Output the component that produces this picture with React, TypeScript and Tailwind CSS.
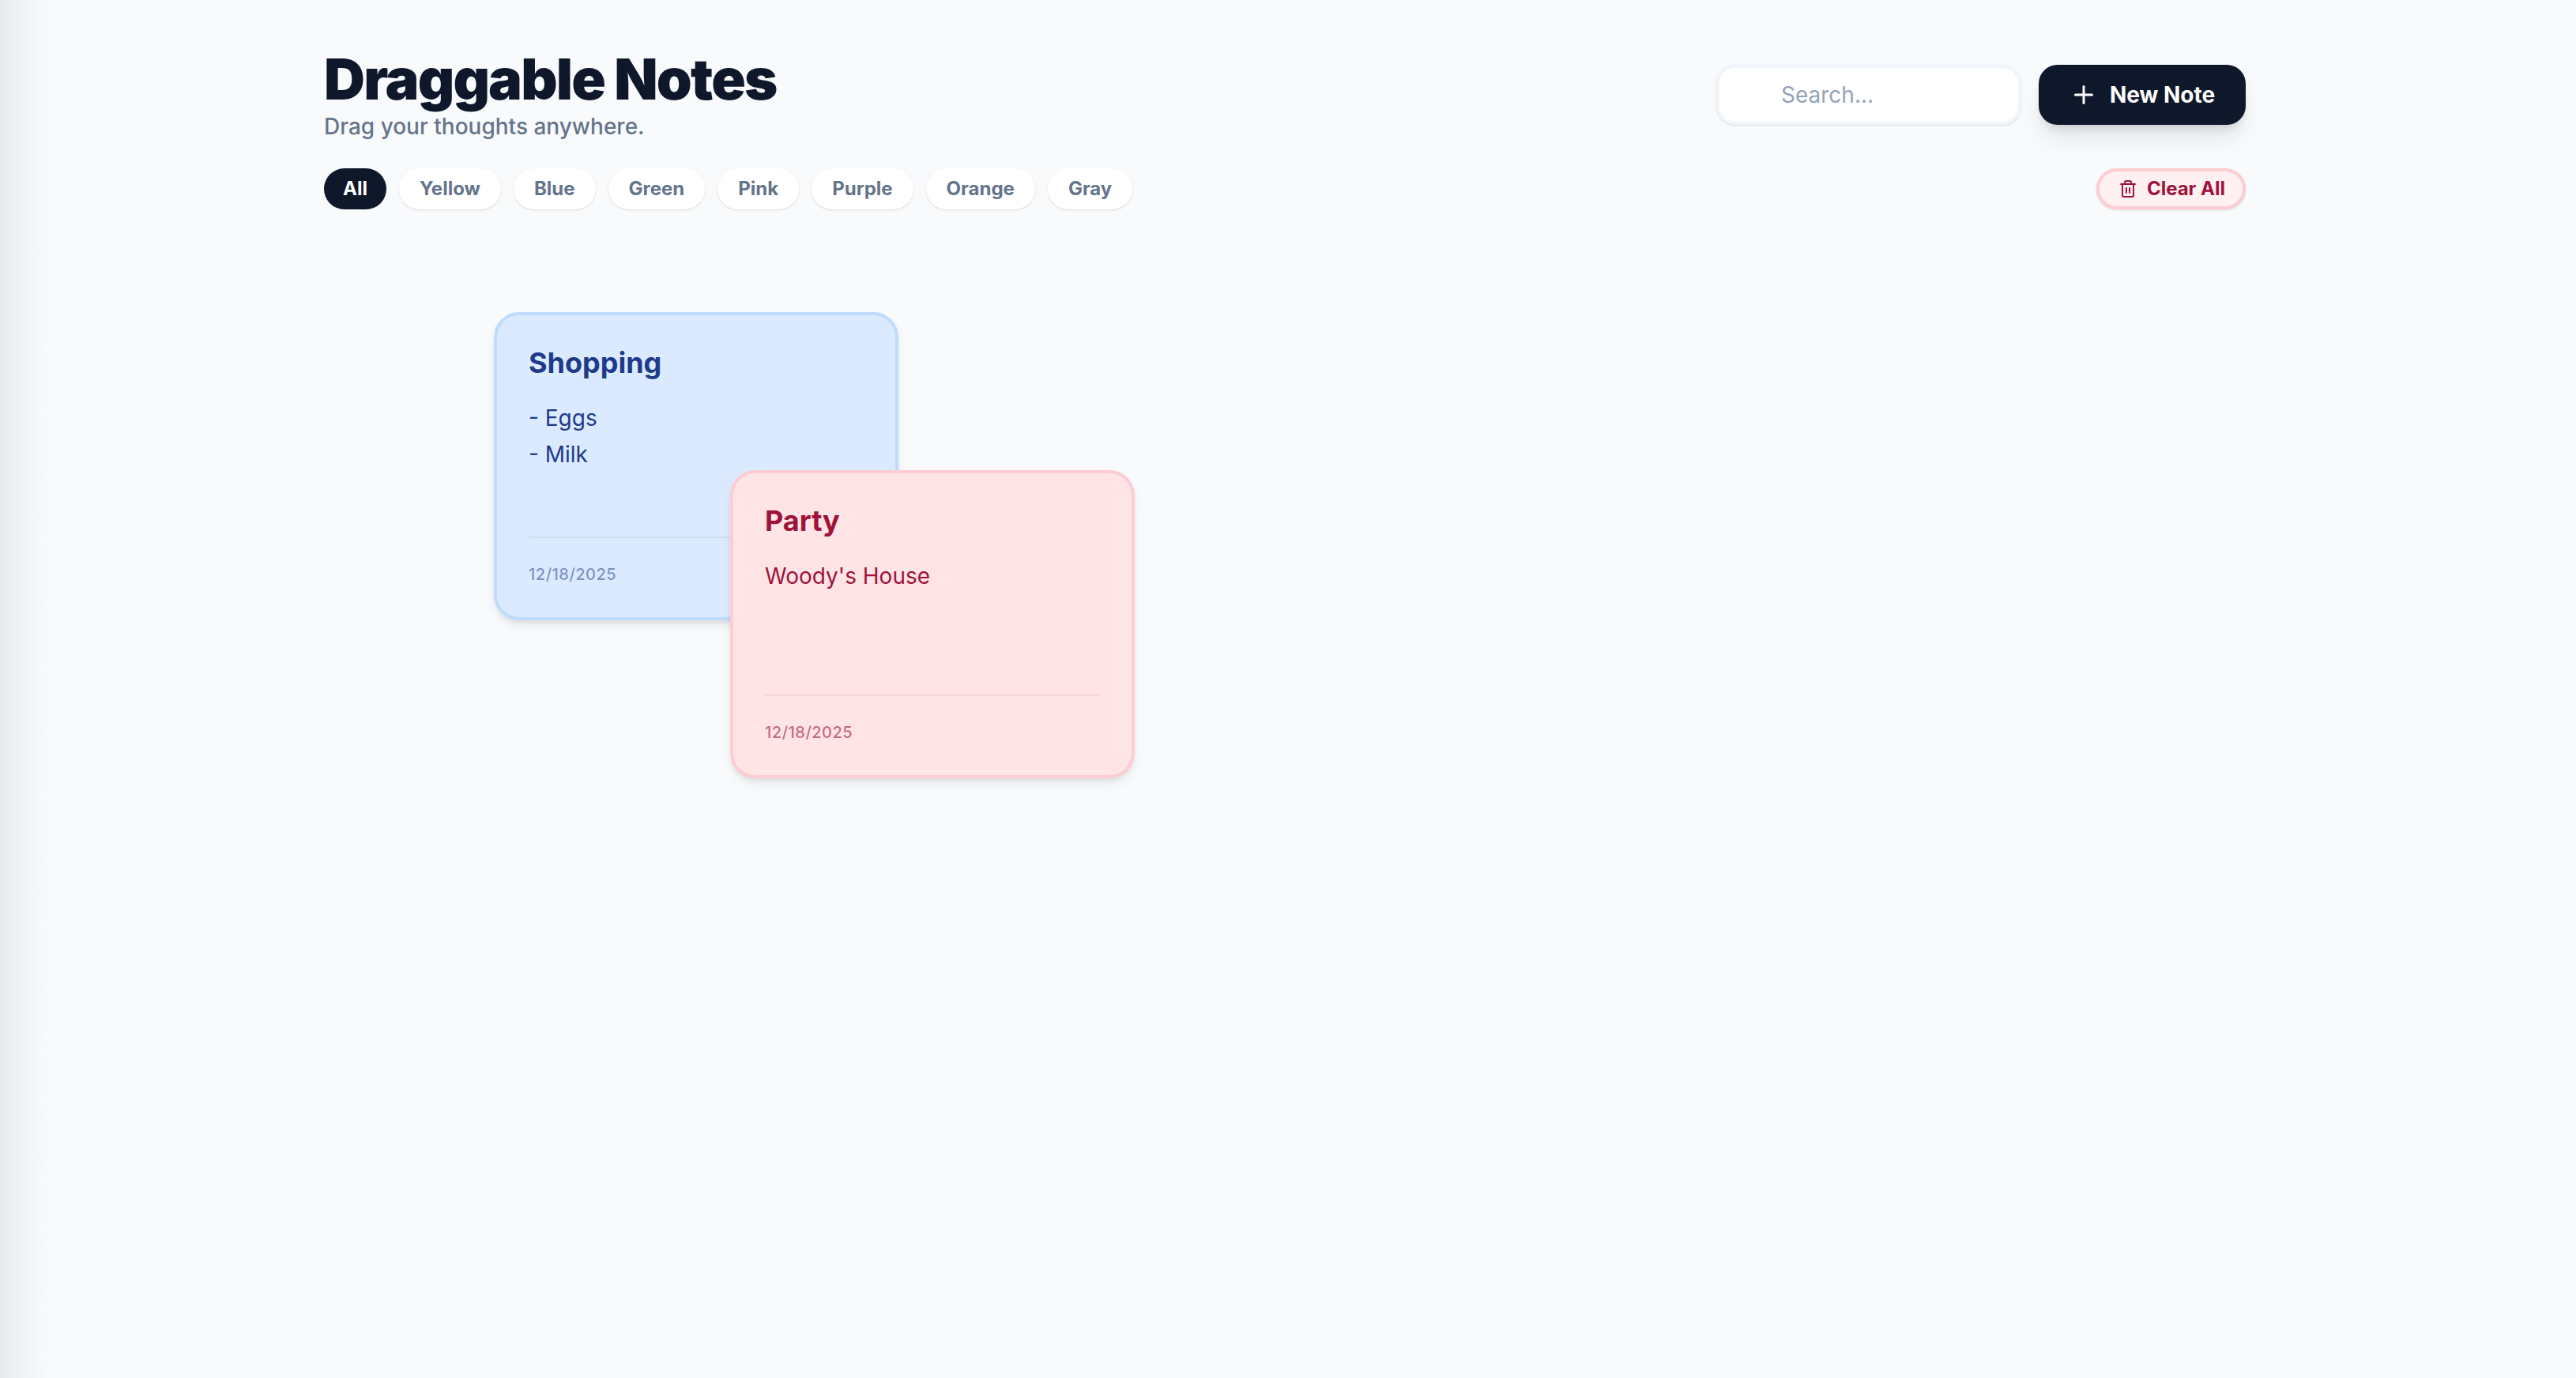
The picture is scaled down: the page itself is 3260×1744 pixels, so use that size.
import React from 'react';
import { Plus, Trash2 } from 'lucide-react';

const filters = ['All', 'Yellow', 'Blue', 'Green', 'Pink', 'Purple', 'Orange', 'Gray'];

function NoteCard({ title, lines, className, dateClass, style }: {
  title: string;
  lines: string[];
  className: string;
  dateClass: string;
  style: React.CSSProperties;
}) {
  return (
    <div
      style={style}
      className={`absolute flex h-[390px] w-[512px] flex-col rounded-[32px] border-4 px-10 pt-[32px] pb-[36px] shadow-[0_8px_16px_-4px_rgba(0,0,0,0.1),0_4px_8px_-4px_rgba(0,0,0,0.1)] ${className}`}
    >
      <h3 className="text-[36px] leading-[56px] font-bold">{title}</h3>
      <div className="mt-[20px] flex-1 text-[28px] leading-[45.5px]">
        {lines.map(line => <p key={line}>{line}</p>)}
      </div>
      <div className={`mb-[2px] border-t-2 pt-[30px] text-[20px] leading-[32px] font-medium tracking-[0.5px] ${dateClass}`}>
        12/18/2025
      </div>
    </div>
  );
}

export default function App() {
  return (
    <div className="relative min-h-[1744px] bg-[#f8fafc] pt-[64px] pr-[418px] pl-[410px] font-['Inter',sans-serif]">
      <div className="absolute inset-y-0 left-0 w-[60px] bg-gradient-to-r from-[#e9eaeb] to-transparent"></div>

      <div className="relative flex items-start justify-between">
        <div>
          <h1 className="text-[72px] leading-[72px] font-black tracking-[-1.9px] text-[#0f172a]">Draggable Notes</h1>
          <p className="mt-[8px] text-[28px] leading-[32px] font-medium text-[#64748b]">Drag your thoughts anywhere.</p>
        </div>
        <div className="mt-[18px] flex gap-[22px]">
          <input
            readOnly
            placeholder="Search..."
            className="h-[76px] w-[386px] rounded-3xl border-4 border-[#f1f5f9] bg-white pl-[78px] text-[28px] text-[#334155] shadow-sm outline-none placeholder:text-[#94a3b8]"
          />
          <button className="flex h-[76px] w-[262px] items-center justify-center gap-[15px] rounded-3xl bg-[#0f172a] text-[28px] font-bold text-white shadow-[0_20px_30px_-6px_rgba(0,0,0,0.1),0_8px_12px_-4px_rgba(0,0,0,0.1)]">
            <Plus className="h-9 w-9" strokeWidth={2} />
            New Note
          </button>
        </div>
      </div>

      <div className="relative mt-[37px] flex items-center justify-between">
        <div className="flex gap-4">
          {filters.map(name => (
            <button
              key={name}
              className={
                name === 'All'
                  ? 'h-[52px] rounded-full bg-[#0f172a] px-6 text-[24px] font-bold text-white'
                  : 'h-[52px] rounded-full bg-white px-[26px] text-[24px] font-bold text-[#64748b] shadow-sm'
              }
            >
              {name}
            </button>
          ))}
        </div>
        <button className="flex h-[52px] items-center gap-3 rounded-full border-4 border-[#fecdd3] bg-[#fff1f2] pr-[22px] pl-[24px] text-[24px] font-bold text-[#9f1239] shadow-sm">
          <Trash2 className="h-6 w-6" strokeWidth={2} />
          Clear All
        </button>
      </div>

      <NoteCard
        title="Shopping"
        lines={['- Eggs', '- Milk']}
        style={{ left: 625, top: 395 }}
        className="border-[#bfdbfe] bg-[#dbeafe] text-[#1e3a8a]"
        dateClass="border-[#0000000d] text-[#1e3a8a]/50"
      />
      <NoteCard
        title="Party"
        lines={["Woody's House"]}
        style={{ left: 924, top: 595 }}
        className="border-[#fecdd3] bg-[#ffe4e6] text-[#9f1239]"
        dateClass="border-[#0000000d] text-[#9f1239]/60"
      />
    </div>
  );
}
